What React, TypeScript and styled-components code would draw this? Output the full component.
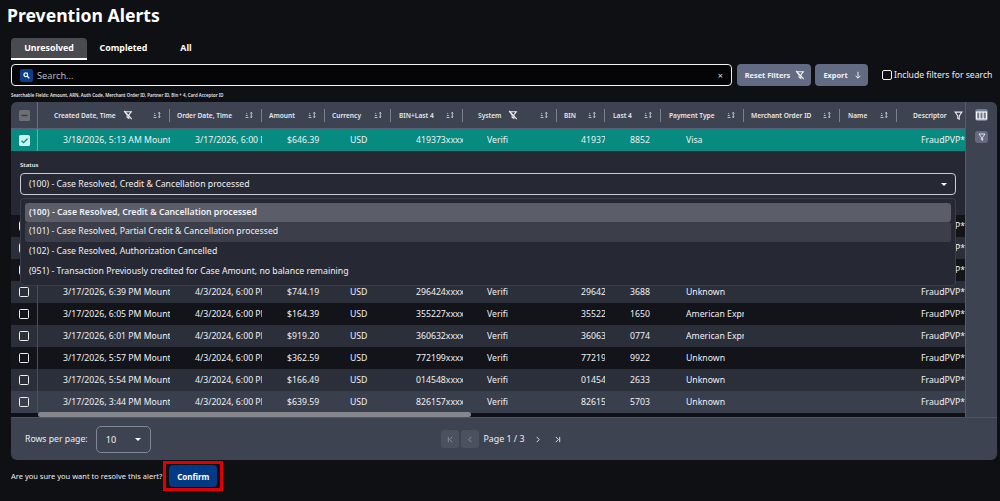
import React from "react";
import styled, { createGlobalStyle } from "styled-components";

const Global = createGlobalStyle`
  html, body { margin: 0; padding: 0; background: #0f1014; }
  body { font-family: "Noto Sans", "Open Sans", sans-serif; color: #fff; overflow: hidden; }
  * { box-sizing: border-box; }
`;

const COLS = "27px 132px 92px 63px 66px 72px 94px 48px 56px 83px 96px 57px 68px";

const Page = styled.div`
  width: 1000px;
  height: 501px;
  padding: 0 3px 0 7px;
  display: flex;
  flex-direction: column;
`;
const Title = styled.h1`
  margin: 2px 0 0;
  height: 26px;
  font-size: 17.6px;
  line-height: 26px;
  font-weight: 700;
  letter-spacing: 0;
`;
const Tabs = styled.div`
  display: flex;
  margin: 10px 0 0 4px;
  height: 22px;
`;
const Tab = styled.div<{ $active?: boolean; $w: number }>`
  width: ${(p) => p.$w}px;
  height: 22px;
  display: flex;
  align-items: center;
  justify-content: center;
  font-size: 8.8px;
  font-weight: 700;
  border-radius: 4px 4px 0 0;
  background: ${(p) => (p.$active ? "#4a4b50" : "transparent")};
  border-bottom: 2px solid ${(p) => (p.$active ? "#fff" : "transparent")};
`;
const SearchRow = styled.div`
  display: flex;
  align-items: center;
  margin: 4px 0 0 4px;
  height: 22px;
`;
const SearchBox = styled.div`
  width: 721px;
  height: 22px;
  background: #050507;
  border: 1px solid #f2f2f2;
  border-radius: 4px;
  display: flex;
  align-items: center;
  padding: 0 8px 0 8px;
  font-size: 9.2px;
  color: #b4b8c6;
`;
const SearchIcon = styled.span`
  width: 13px;
  height: 13px;
  border-radius: 2px;
  background: #0a3d8a;
  display: flex;
  align-items: center;
  justify-content: center;
  margin-right: 4px;
`;
const Clear = styled.span`
  margin-left: auto;
  font-size: 9px;
  color: #ddd;
`;
const ActionButton = styled.div<{ $w: number; $ml: number; $gap: number }>`
  width: ${(p) => p.$w}px;
  margin-left: ${(p) => p.$ml}px;
  height: 22px;
  background: #636b84;
  border-radius: 4px;
  display: flex;
  align-items: center;
  justify-content: center;
  gap: ${(p) => p.$gap}px;
  padding-left: 2px;
  font-size: 7.4px;
  font-weight: 700;
  color: #f2f2f2;
`;
const IncludeLabel = styled.label`
  display: flex;
  align-items: center;
  margin-left: 14px;
  font-size: 8.65px;
  color: #eceef2;
  white-space: nowrap;
`;
const CheckSmall = styled.span`
  width: 10px;
  height: 10px;
  border: 1px solid #f2f2f2;
  border-radius: 2px;
  margin-right: 2px;
`;
const Hint = styled.div`
  margin: 4px 0 0 4px;
  height: 10px;
  line-height: 10px;
  font-size: 4.35px;
  font-weight: 600;
  color: #e6e6e6;
`;
const Panel = styled.div`
  position: relative;
  margin: 2px 0 0 4px;
  width: 986px;
  height: 358px;
  background: #3e4352;
  border-radius: 6px;
  display: flex;
  flex-direction: column;
  overflow: hidden;
`;
const TableArea = styled.div`
  display: flex;
  height: 315px;
`;
const Table = styled.div`
  width: 954px;
  display: flex;
  flex-direction: column;
  background: #101116;
  position: relative;
`;
const Side = styled.div`
  width: 32px;
  background: #3e4352;
  border-left: 1px solid #565c6e;
  display: flex;
  flex-direction: column;
  align-items: center;
  padding-top: 7px;
  gap: 10px;
`;
const SideButton = styled.div<{ $light?: boolean }>`
  width: 13px;
  height: 12px;
  border-radius: 3px;
  background: ${(p) => (p.$light ? "#767d92" : "#636a84")};
  display: flex;
  align-items: center;
  justify-content: center;
`;
const GridRow = styled.div`
  display: grid;
  grid-template-columns: ${COLS};
`;
const Head = styled(GridRow)`
  height: 27px;
  background: #3e4352;
  border-bottom: 1px solid #5a6072;
`;
const HeadCheck = styled.div`
  display: flex;
  align-items: center;
  justify-content: center;
  border-right: 1px solid #6a7084;
`;
const HeadCell = styled.div<{ $pl: number }>`
  display: flex;
  align-items: center;
  padding-left: ${(p) => p.$pl}px;
  padding-right: 9px;
  font-size: 6.6px;
  font-weight: 600;
  color: #e8e8ea;
  position: relative;
  white-space: nowrap;
`;
const Sep = styled.span`
  position: absolute;
  right: 0;
  top: 7px;
  height: 13px;
  width: 1px;
  background: #7a8092;
`;
const HeadFilter = styled.span`
  display: flex;
  margin-left: 7px;
`;
const HeadSort = styled.span`
  margin-left: auto;
  display: flex;
`;
const Row = styled(GridRow)<{ $tone: string }>`
  height: 22px;
  background: ${(p) => p.$tone};
`;
const CheckCell = styled.div<{ $line?: string }>`
  display: flex;
  align-items: center;
  justify-content: center;
  border-right: 1px solid ${(p) => p.$line ?? "#4a4f5e"};
`;
const Box = styled.span`
  width: 10px;
  height: 10px;
  border: 1.5px solid #eee;
  border-radius: 1.5px;
  display: block;
`;
const Cell = styled.div<{ $pl: number }>`
  padding-left: ${(p) => p.$pl}px;
  font-size: 8.7px;
  line-height: 22px;
  color: #f0f1f4;
  white-space: nowrap;
  overflow: hidden;
`;
const Detail = styled.div`
  height: 64px;
  background: #262934;
  padding: 9px 9px 0;
`;
const DetailLabel = styled.div`
  font-size: 6px;
  font-weight: 600;
  line-height: 10px;
  color: #eceef2;
`;
const Select = styled.div`
  margin-top: 3px;
  width: 936px;
  height: 22px;
  border: 1px solid #c8ccd8;
  border-radius: 4px;
  display: flex;
  align-items: center;
  justify-content: space-between;
  padding: 0 8px;
  font-size: 8.73px;
  color: #eef0f4;
`;
const Caret = styled.span`
  width: 0;
  height: 0;
  border-left: 3px solid transparent;
  border-right: 3px solid transparent;
  border-top: 3px solid #fff;
`;
const Menu = styled.div`
  position: absolute;
  left: 9px;
  top: 96px;
  width: 936px;
  height: 88px;
  background: #262934;
  border: 1px solid #3a3e4b;
  border-radius: 4px;
  padding: 3.5px 4px;
`;
const Option = styled.div<{ $tone?: string; $bold?: boolean }>`
  height: 19.9px;
  line-height: 19.9px;
  padding-left: 4px;
  border-radius: 3px;
  font-size: 8.73px;
  font-weight: ${(p) => (p.$bold ? 600 : 400)};
  color: #f0f1f4;
  background: ${(p) => p.$tone ?? "transparent"};
`;
const Scroll = styled.div`
  position: absolute;
  left: 27px;
  bottom: 0;
  width: 433px;
  height: 5px;
  border-radius: 3px;
  background: #85878c;
`;
const Footer = styled.div`
  flex: 1;
  display: grid;
  grid-template-columns: 1fr auto 1fr;
  align-items: center;
  padding: 0 14px;
  font-size: 8.7px;
  color: #eceef2;
  border-top: 1px solid #4f5464;
`;
const RowsPer = styled.div`
  display: flex;
  align-items: center;
  gap: 8px;
`;
const PageSelect = styled.div`
  width: 55px;
  height: 27px;
  border: 1px solid #80869a;
  border-radius: 5px;
  display: flex;
  align-items: center;
  justify-content: space-between;
  padding: 0 9px;
  font-size: 9.2px;
`;
const Pager = styled.div`
  display: flex;
  align-items: center;
  gap: 2px;
`;
const PageBtn = styled.span<{ $off?: boolean }>`
  width: 18px;
  height: 18px;
  border-radius: 3px;
  background: ${(p) => (p.$off ? "#4c5160" : "transparent")};
  color: ${(p) => (p.$off ? "#8d92a2" : "#f0f0f0")};
  display: flex;
  align-items: center;
  justify-content: center;
`;
const PageText = styled.span`
  margin: 0 2px;
  font-size: 8.85px;
`;
const ConfirmRow = styled.div`
  display: flex;
  align-items: center;
  margin: 1px 0 0 4px;
  font-size: 7.5px;
  color: #eceef2;
`;
const ConfirmFrame = styled.div`
  border: 3px solid #e00000;
  padding: 1px 3px;
  margin-left: 1px;
`;
const ConfirmBtn = styled.div`
  width: 48px;
  height: 22px;
  border-radius: 4px;
  background: #033a85;
  display: flex;
  align-items: center;
  justify-content: center;
  font-size: 8px;
  font-weight: 700;
  color: #fff;
`;

const FilterOff = ({ c = "#eee", s = 10 }: { c?: string; s?: number }) => (
  <svg width={s} height={s} viewBox="0 0 12 12" fill="none" stroke={c} strokeWidth="1.3">
    <path d="M2 2h8L7 6v4L5 9V6z" />
    <path d="M1.5 1l9 10" />
  </svg>
);
const Funnel = ({ c = "#eee", s = 9 }: { c?: string; s?: number }) => (
  <svg width={s} height={s} viewBox="0 0 12 12" fill="none" stroke={c} strokeWidth="1.4">
    <path d="M1.5 1.5h9L7 6.5V11L5 10V6.5z" />
  </svg>
);
const SortIcon = () => (
  <svg width="8" height="6" viewBox="0 0 8 6" fill="none" stroke="#c9ccd4" strokeWidth="0.9">
    <path d="M0.5 5.5h3M0.8 3.5h2M1.2 1.5h1" />
    <path d="M6.3 0.3v5.4M5.2 1.4L6.3 0.3l1.1 1.1M5.2 4.6l1.1 1.1 1.1-1.1" />
  </svg>
);

const headers: [string, number, React.ReactNode?][] = [
  ["Created Date, Time", 16, <FilterOff key="f" />],
  ["Order Date, Time", 7],
  ["Amount", 7],
  ["Currency", 7],
  ["BIN+Last 4", 8],
  ["System", 15, <FilterOff key="f" />],
  ["BIN", 7],
  ["Last 4", 8],
  ["Payment Type", 8],
  ["Merchant Order ID", 7],
  ["Name", 8],
  ["Descriptor", 16, <Funnel key="f" />],
];

const rows = [
  { d: "3/17/2026, 7:02 PM Mountain", o: "4/3/2024, 6:00 PM", a: "$310.29", b: "512345xxxx", n: "51234", l: "1180", p: "Unknown", t: "#12141a" },
  { d: "3/17/2026, 6:58 PM Mountain", o: "4/3/2024, 6:00 PM", a: "$212.49", b: "402311xxxx", n: "40231", l: "4471", p: "Visa", t: "#2b2f3a" },
  { d: "3/17/2026, 6:44 PM Mountain", o: "4/3/2024, 6:00 PM", a: "$498.10", b: "601122xxxx", n: "60112", l: "2096", p: "Unknown", t: "#12141a" },
  { d: "3/17/2026, 6:39 PM Mountain", o: "4/3/2024, 6:00 PM", a: "$744.19", b: "296424xxxx", n: "29642", l: "3688", p: "Unknown", t: "#2b2f3a" },
  { d: "3/17/2026, 6:05 PM Mountain", o: "4/3/2024, 6:00 PM", a: "$164.39", b: "355227xxxx", n: "35522", l: "1650", p: "American Express", t: "#12141a" },
  { d: "3/17/2026, 6:01 PM Mountain", o: "4/3/2024, 6:00 PM", a: "$919.20", b: "360632xxxx", n: "36063", l: "0774", p: "American Express", t: "#2b2f3a" },
  { d: "3/17/2026, 5:57 PM Mountain", o: "4/3/2024, 6:00 PM", a: "$362.59", b: "772199xxxx", n: "77219", l: "9922", p: "Unknown", t: "#12141a" },
  { d: "3/17/2026, 5:54 PM Mountain", o: "4/3/2024, 6:00 PM", a: "$166.49", b: "014548xxxx", n: "01454", l: "2633", p: "Unknown", t: "#2b2f3a" },
  { d: "3/17/2026, 3:44 PM Mountain", o: "4/3/2024, 6:00 PM", a: "$639.59", b: "826157xxxx", n: "82615", l: "5703", p: "Unknown", t: "#3a3f4e" },
];

const Cells = (r: { d: string; o: string; a: string; b: string; n: string; l: string; p: string }) => (
  <>
    <Cell $pl={25}>{r.d}</Cell>
    <Cell $pl={25}>{r.o}</Cell>
    <Cell $pl={25}>{r.a}</Cell>
    <Cell $pl={25}>USD</Cell>
    <Cell $pl={25}>{r.b}</Cell>
    <Cell $pl={24}>Verifi</Cell>
    <Cell $pl={24}>{r.n}</Cell>
    <Cell $pl={25}>{r.l}</Cell>
    <Cell $pl={25}>{r.p}</Cell>
    <Cell $pl={24} />
    <Cell $pl={24} />
    <Cell $pl={24}>FraudPVP*</Cell>
  </>
);

export default function App() {
  return (
    <Page>
      <Global />
      <Title>Prevention Alerts</Title>
      <Tabs>
        <Tab $active $w={76}>Unresolved</Tab>
        <Tab $w={73}>Completed</Tab>
        <Tab $w={52}>All</Tab>
      </Tabs>
      <SearchRow>
        <SearchBox>
          <SearchIcon>
            <svg width="7" height="7" viewBox="0 0 10 10" fill="none" stroke="#fff" strokeWidth="1.8">
              <circle cx="4" cy="4" r="2.6" />
              <path d="M6 6l3 3" />
            </svg>
          </SearchIcon>
          Search...
          <Clear>×</Clear>
        </SearchBox>
        <ActionButton $w={74} $ml={5} $gap={5}>Reset Filters <FilterOff c="#f0f0f0" /></ActionButton>
        <ActionButton $w={53} $ml={4} $gap={6}>
          Export
          <svg width="8" height="8" viewBox="0 0 10 10" fill="none" stroke="#f0f0f0" strokeWidth="1.2">
            <path d="M5 1v8M2 6l3 3 3-3" />
          </svg>
        </ActionButton>
        <IncludeLabel><CheckSmall />Include filters for search</IncludeLabel>
      </SearchRow>
      <Hint>Searchable Fields: Amount, ARN, Auth Code, Merchant Order ID, Partner ID, Bin + 4, Card Acceptor ID</Hint>
      <Panel>
        <TableArea>
          <Table>
            <Head>
              <HeadCheck>
                <svg width="11" height="11" viewBox="0 0 11 11">
                  <rect width="11" height="11" rx="1.5" fill="#6e6f75" />
                  <rect x="2.5" y="4.8" width="6" height="1.4" fill="#3a3b40" />
                </svg>
              </HeadCheck>
              {headers.map(([h, pl, icon], i) => (
                <HeadCell key={h} $pl={pl}>
                  {h}
                  {icon && <HeadFilter>{icon}</HeadFilter>}
                  {i < 11 && <HeadSort><SortIcon /></HeadSort>}
                  {i < 11 && <Sep />}
                </HeadCell>
              ))}
            </Head>
            <Row $tone="#078a80">
              <CheckCell $line="#5fb3ac">
                <svg width="11" height="11" viewBox="0 0 11 11">
                  <rect width="11" height="11" rx="1.5" fill="#c9f2ee" />
                  <path d="M2.5 5.8l2 1.9 4-4" fill="none" stroke="#078a80" strokeWidth="1.3" />
                </svg>
              </CheckCell>
              <Cells d="3/18/2026, 5:13 AM Mountain" o="3/17/2026, 6:00 PM" a="$646.39" b="419373xxxx" n="41937" l="8852" p="Visa" />
            </Row>
            <Detail>
              <DetailLabel>Status</DetailLabel>
              <Select>
                (100) - Case Resolved, Credit &amp; Cancellation processed
                <Caret />
              </Select>
            </Detail>
            {rows.map((r) => (
              <Row key={r.d} $tone={r.t}>
                <CheckCell><Box /></CheckCell>
                <Cells {...r} />
              </Row>
            ))}
            <Menu>
              <Option $tone="#5b5e69" $bold>(100) - Case Resolved, Credit &amp; Cancellation processed</Option>
              <Option $tone="#3c3f4a">(101) - Case Resolved, Partial Credit &amp; Cancellation processed</Option>
              <Option>(102) - Case Resolved, Authorization Cancelled</Option>
              <Option>(951) - Transaction Previously credited for Case Amount, no balance remaining</Option>
            </Menu>
            <Scroll />
          </Table>
          <Side>
            <SideButton $light>
              <svg width="11" height="9" viewBox="0 0 11 9" fill="none" stroke="#fff" strokeWidth="1.1">
                <rect x="0.6" y="1" width="9.8" height="7" />
                <path d="M3.9 1v7M7.1 1v7" />
              </svg>
            </SideButton>
            <SideButton><Funnel s={8} /></SideButton>
          </Side>
        </TableArea>
        <Footer>
          <RowsPer>
            Rows per page:
            <PageSelect>10<Caret /></PageSelect>
          </RowsPer>
          <Pager>
            <PageBtn $off>
              <svg width="7" height="7" viewBox="0 0 8 8" fill="none" stroke="currentColor"><path d="M1.5 1v6M6 1L3 4l3 3" /></svg>
            </PageBtn>
            <PageBtn $off>
              <svg width="7" height="7" viewBox="0 0 8 8" fill="none" stroke="currentColor"><path d="M5 1L2 4l3 3" /></svg>
            </PageBtn>
            <PageText>Page 1 / 3</PageText>
            <PageBtn>
              <svg width="7" height="7" viewBox="0 0 8 8" fill="none" stroke="currentColor"><path d="M3 1l3 3-3 3" /></svg>
            </PageBtn>
            <PageBtn>
              <svg width="7" height="7" viewBox="0 0 8 8" fill="none" stroke="currentColor"><path d="M6.5 1v6M2 1l3 3-3 3" /></svg>
            </PageBtn>
          </Pager>
          <span />
        </Footer>
      </Panel>
      <ConfirmRow>
        Are you sure you want to resolve this alert?
        <ConfirmFrame><ConfirmBtn>Confirm</ConfirmBtn></ConfirmFrame>
      </ConfirmRow>
    </Page>
  );
}
